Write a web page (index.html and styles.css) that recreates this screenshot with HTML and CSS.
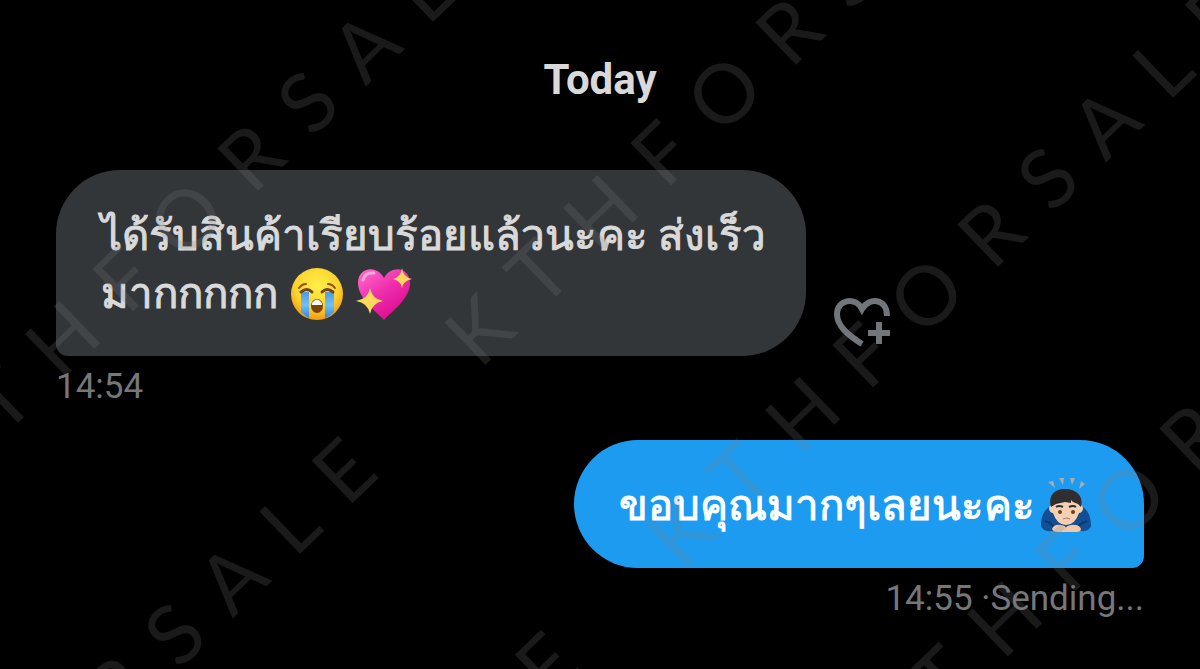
FILE: index.html
```html
<!DOCTYPE html>
<html lang="th">
  <head>
    <meta charset="UTF-8" />
    <meta name="viewport" content="width=device-width, initial-scale=1.0" />
    <title>Messages</title>
    <link rel="stylesheet" href="styles.css">
  </head>
  <body>
    <main class="chat">
      <h1 class="day">Today</h1>

      <article class="message received">
        <div class="row">
          <p class="bubble">ได้รับสินค้าเรียบร้อยแล้วนะคะ ส่งเร็ว<br>มากกกกก<svg class="emoji" viewBox="0 0 52 52" role="img" aria-label="Loudly crying face">
              <defs>
                <radialGradient id="face" cx="50%" cy="35%" r="65%">
                  <stop offset="0" stop-color="#fff04a" />
                  <stop offset="0.65" stop-color="#fdd22f" />
                  <stop offset="1" stop-color="#f09a12" />
                </radialGradient>
                <linearGradient id="tear" x1="0" y1="0" x2="0" y2="1">
                  <stop offset="0" stop-color="#4a9be0" />
                  <stop offset="0.5" stop-color="#74c0f5" />
                  <stop offset="1" stop-color="#2f86dd" />
                </linearGradient>
              </defs>
              <circle cx="26" cy="26" r="26" fill="url(#face)" />
              <path d="M10 24h8v26q-4-2-8-6zM34 24h9v20q-4 4-9 6z" fill="url(#tear)" />
              <path d="M10 24q6-5 11 0M31 24q5-5 11 0" fill="none" stroke="#75430b" stroke-width="3" stroke-linecap="round" />
              <path d="M8 20q3-4 7-4M37 16q4 0 7 4" fill="none" stroke="#8a520e" stroke-width="2" stroke-linecap="round" />
              <ellipse cx="26" cy="38" rx="6" ry="7" fill="#7a4508" />
              <path d="M21 35q5-7 10 0v2H21z" fill="#fff" />
            </svg><svg class="emoji heart" viewBox="0 0 56 52" role="img" aria-label="Sparkling heart">
              <defs>
                <linearGradient id="pink" x1="0" y1="0" x2="0.7" y2="1">
                  <stop offset="0" stop-color="#ff70cb" />
                  <stop offset="0.5" stop-color="#f02fae" />
                  <stop offset="1" stop-color="#d80b8c" />
                </linearGradient>
              </defs>
              <path d="M28 52C20 43 2 31 2 15C2 0 20-4 28 10C36-4 54 0 54 15C54 31 36 43 28 52z" fill="url(#pink)" />
              <path d="M7 12q2-8 11-7" fill="none" stroke="#ffa3df" stroke-width="3" stroke-linecap="round" />
              <path d="M14 20q2 11 13 13q-11 2-13 13q-2-11-14-13q12-2 14-13zM46 0q1 9 10 11q-9 2-10 9q-1-7-9-9q8-2 9-11z" fill="#ffd75b" />
            </svg></p>
          <button class="react" type="button" aria-label="Add reaction">
            <svg viewBox="0 0 56 50" aria-hidden="true">
              <path d="M28 46C14 37 3 28 3 16C3 2 21-2 28 11C35-1 53 0 53 18" fill="none" stroke="currentColor" stroke-width="6" />
              <path d="M45 24v22M34 35h22" stroke="currentColor" stroke-width="6" />
            </svg>
          </button>
        </div>
        <time class="meta" datetime="14:54">14:54</time>
      </article>

      <article class="message sent">
        <p class="bubble">ขอบคุณมากๆเลยนะคะ<svg class="emoji bow" viewBox="0 0 50 54" role="img" aria-label="Person bowing">
            <path d="M7 4l5-1 2 7zM18 0h5l-1 7zM29 0h5l-3 7zM40 3l4 3-6 5z" fill="#a8acb0" />
            <path d="M0 48C0 36 5 29 13 27h24C45 29 50 36 50 48Q48 54 40 53H10Q2 54 0 48z" fill="#124f94" />
            <path d="M4 43q9 3 10 9M46 43q-9 3-10 9" fill="none" stroke="#0a3870" stroke-width="2" />
            <path d="M8 31q0-4 3-4v-5h28v5q3 0 3 4-1 4-4 4-4 12-13 12T12 35q-3 0-4-4z" fill="#f5d0b2" />
            <path d="M10 29C7 18 13 11 24 11S43 18 40 29l-3-3-5-2-2-2 0 3-6-1-9 2z" fill="#302e31" />
            <path d="M15 29q3-2 7 0M28 29q4-2 7 0" fill="none" stroke="#302e31" stroke-width="2" />
            <circle cx="19" cy="34" r="2" fill="#63421e" />
            <circle cx="32" cy="34" r="2" fill="#63421e" />
            <path d="M22 41q4-2 7 0" fill="none" stroke="#b96f57" stroke-width="1" />
            <path d="M11 51q2-5 9-4 5 1 5 3 0-2 5-3 8-1 10 4 0 3-5 3H17q-5 0-6-3z" fill="#f3c7a5" />
          </svg></p>
        <p class="meta"><time datetime="14:55">14:55</time> ·Sending...</p>
      </article>
    </main>

    <svg class="watermark" aria-hidden="true">
      <defs>
        <text id="mark" transform="rotate(-44)">KTHFORSALE</text>
      </defs>
      <use href="#mark" x="-58" y="496" />
      <use href="#mark" x="480" y="370" />
      <use href="#mark" x="682" y="572" />
      <use href="#mark" x="-191" y="1028" />
      <use href="#mark" x="12" y="1222" />
      <use href="#mark" x="884" y="776" />
    </svg>
  </body>
</html>
```
FILE: styles.css
```css
* {
  margin: 0;
  padding: 0;
  box-sizing: border-box;
}

body {
  position: relative;
  min-height: 100vh;
  overflow: hidden;
  background-color: #000;
  color: #d9d9d9;
  font-family: Roboto, "Noto Sans", sans-serif;
}

.chat {
  padding: 56px 56px 48px;
}

.day {
  margin-bottom: 66px;
  font-size: 42px;
  line-height: 48px;
  font-weight: 700;
  text-align: center;
}

.message {
  display: flex;
  flex-direction: column;
  align-items: flex-start;
}

.message.sent {
  align-items: flex-end;
  margin-top: 31px;
}

.row {
  display: flex;
  align-items: flex-end;
  gap: 28px;
}

.bubble {
  padding: 37px 40px 33px 45px;
  border-radius: 64px;
  font-size: 42px;
  line-height: 58px;
  white-space: nowrap;
  -webkit-text-stroke: 1px currentColor;
}

.received .bubble {
  border-bottom-left-radius: 12px;
  background-color: #323639;
}

.sent .bubble {
  border-bottom-right-radius: 12px;
  background-color: #1d9bf0;
  color: #fff;
}

.emoji {
  width: 52px;
  height: 52px;
  margin-left: 13px;
  vertical-align: -12px;
}

.emoji.heart {
  width: 56px;
}

.emoji.bow {
  width: 50px;
  height: 54px;
  margin-right: 13px;
  margin-left: 6px;
}

.react {
  width: 56px;
  height: 50px;
  margin-bottom: 8px;
  border: none;
  background: none;
  color: #71767b;
  cursor: pointer;
}

.react svg {
  display: block;
  width: 100%;
  height: 100%;
}

.meta {
  margin-top: 9px;
  color: #75777a;
  font-size: 35px;
  line-height: 44px;
}

.watermark {
  position: absolute;
  inset: 0;
  width: 100%;
  height: 100%;
  fill: #808080;
  opacity: 0.2;
  font-family: Lato, sans-serif;
  font-size: 82px;
  letter-spacing: 31px;
  pointer-events: none;
}
```
